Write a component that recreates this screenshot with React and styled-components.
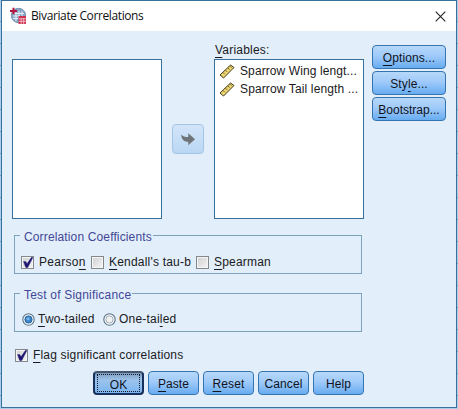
import React from "react";
import styled, { createGlobalStyle } from "styled-components";

const Global = createGlobalStyle`
  * { box-sizing: border-box; }
  body { margin: 0; overflow: hidden; }
`;

const Desktop = styled.div`
  width: 458px;
  height: 409px;
  padding: 0 1px 1px;
  background: repeating-linear-gradient(#a9cdea 0 21px, #6f9fc6 21px 22px);
  font-family: "Liberation Sans", Arial, sans-serif;
  font-size: 12px;
  color: #1a1a22;
`;

const Dialog = styled.div`
  width: 456px;
  height: 408px;
  border: 1px solid #37719c;
  background: #e2eefa;
  display: flex;
  flex-direction: column;
`;

const TitleBar = styled.header`
  height: 30px;
  flex: none;
  background: #fff;
  display: flex;
  align-items: center;
  padding: 0 10px 0 7px;
`;

const Title = styled.h1`
  flex: 1;
  margin: 0 0 0 4px;
  font: 400 12px/18px "Open Sans", "Noto Sans", sans-serif;
  letter-spacing: -0.38px;
  color: #111;
  white-space: nowrap;
`;

const Upper = styled.div`
  display: flex;
  flex: none;
  height: 204px;
  padding-left: 10px;
`;

const List = styled.div`
  width: 150px;
  height: 160px;
  border: 1px solid #35709f;
  background: #fff;
  padding-top: 2px;
`;

const SourceColumn = styled.div`
  padding-top: 28px;
`;

const MoveColumn = styled.div`
  width: 52px;
  padding: 93px 0 0 10px;
`;

const MoveButton = styled.button`
  width: 32px;
  height: 30px;
  padding: 0;
  border: 1px solid #a5c5e5;
  border-radius: 4px;
  background: linear-gradient(#d3e5f9, #bad7f5);
  display: grid;
  place-items: center;
`;

const Label = styled.div`
  height: 28px;
  padding: 12px 0 0 1px;
  line-height: 15px;
`;

const ListRow = styled.div`
  height: 18px;
  display: flex;
  align-items: center;
  gap: 5px;
  padding-left: 4px;
  white-space: nowrap;
`;

const SideButtons = styled.div`
  display: flex;
  flex-direction: column;
  gap: 2px;
  padding: 14px 0 0 8px;
`;

const Button = styled.button`
  width: ${(p) => p.$width}px;
  height: 24px;
  padding: 1px 0 0;
  border: 1px solid #3475b0;
  border-radius: 4px;
  background: linear-gradient(#b7d8f9 0%, #9fcafa 45%, #68acf0 100%);
  color: #10131c;
  font: 12px/16px "Liberation Sans", Arial, sans-serif;
  white-space: nowrap;
`;

const DefaultButton = styled(Button)`
  padding: 0;
  border: 2px solid #17305c;
  border-top-color: #46566e;
  background: linear-gradient(#7f9cbd 0%, #9cc3ec 35%, #7bb5f1 100%);
`;

const FocusRing = styled.span`
  display: block;
  height: 18px;
  margin: 0 2px;
  border: 1px dotted #101828;
  padding-top: 3px;
  line-height: 14px;
`;

const Group = styled.section`
  width: 348px;
  height: 39px;
  flex: none;
  margin: 0 0 ${(p) => p.$after}px 12px;
  border: 1px solid #7da2bb;
`;

const Legend = styled.h2`
  width: max-content;
  height: 16px;
  margin: -7px 0 0 5px;
  padding: 0 1px 0 4px;
  background: #e2eefa;
  color: #434796;
  font: 400 12px/16px "Liberation Sans", Arial, sans-serif;
`;

const OptionRow = styled.div`
  display: flex;
  align-items: center;
  height: 16px;
  flex: none;
  padding-left: ${(p) => p.$left}px;
  margin-top: ${(p) => p.$top}px;
`;

const Option = styled.label`
  display: flex;
  align-items: center;
  gap: ${(p) => p.$gap}px;
  width: ${(p) => p.$width}px;
  white-space: nowrap;
`;

const Box = styled.span`
  width: 13px;
  height: 13px;
  flex: none;
  border: 1px solid #83888d;
  box-shadow: inset 0 0 0 1px #f5f5f5;
  background: linear-gradient(135deg, #cfcfd0, #f6f6f6);
  display: block;

  svg { display: block; margin: -1px; }
`;

const Text = styled.span`
  letter-spacing: ${(p) => p.$spacing || 0}px;
  white-space: nowrap;
`;

const Key = styled.span`
  text-decoration: underline;
  text-decoration-thickness: 1px;
  text-underline-offset: 2.5px;
  text-decoration-skip-ink: none;
`;

const Footer = styled.footer`
  display: flex;
  gap: 4px;
  padding: 8px 0 0 91px;
`;

/* Renders a caption, underlining the character that follows "&". */
function Caption({ text, spacing }) {
  const at = text.indexOf("&");
  if (at < 0) return <Text $spacing={spacing}>{text}</Text>;
  return (
    <Text $spacing={spacing}>
      {text.slice(0, at)}
      <Key>{text[at + 1]}</Key>
      {text.slice(at + 2)}
    </Text>
  );
}

function AppIcon() {
  return (
    <svg width="18" height="18" viewBox="0 0 18 18">
      <circle cx="9.5" cy="8.5" r="7.2" fill="#86a5c6" stroke="#7795b5" />
      <path d="M5 6.500h10M4 9h7M4 11.500h5M7 5v9M10 4v7M13 4v5" stroke="#e5eff8" strokeWidth="1" />
      <path d="M1 4h7M4.500 .800v6.500" stroke="#b5123c" strokeWidth="2" />
      <path d="M9.500 9h7.500v8H9.500z" fill="#cf3453" />
      <path d="M10 11.800h7M10 14.300h7M12.200 11v6M14.700 11v6" stroke="#f5cbd4" strokeWidth=".8" />
    </svg>
  );
}

function CloseIcon() {
  return (
    <svg width="11" height="11" viewBox="0 0 11 11">
      <path d="M.7.7l9.6 9.6M10.3.7L.7 10.3" stroke="#222" strokeWidth="1.1" />
    </svg>
  );
}

function Ruler() {
  return (
    <svg width="16" height="15" viewBox="0 0 16 15">
      <path d="M1 11L11.500 1l3.500 2.500L4.500 14z" fill="#edd670" stroke="#40391b" />
      <path d="M4 8.500l1.600 1.600M6.500 6.200l1.600 1.600M9 4l1.600 1.600M11 2.200l1.400 1.400" stroke="#5c5020" strokeWidth=".9" />
    </svg>
  );
}

function MoveArrow() {
  return (
    <svg width="16" height="14" viewBox="0 0 16 14">
      <path d="M1.200 2.500C2.800 4.500 5 5 8.300 5V1.200L15 7.200l-6.700 6V9.800C4 10 1.200 7 1.200 2.500z" fill="#6e7478" />
    </svg>
  );
}

function Check({ checked }) {
  return (
    <Box>
      {checked && (
        <svg width="13" height="13" viewBox="0 0 13 13">
          <path d="M2.600 5.600l2.400.2.900 2.200L10.600 1.300l1.200.3L6.700 11.500H4.800z" fill="#1c1470" stroke="#1c1470" strokeWidth=".5" />
        </svg>
      )}
    </Box>
  );
}

function Radio({ checked }) {
  return (
    <svg width="13" height="13" viewBox="0 0 13 13">
      <circle cx="6.500" cy="6.500" r="5.700" fill="#f5f8fa" stroke="#597489" strokeWidth="1.100" />
      <circle cx="6.500" cy="6.500" r="3.600" fill={checked ? "#3b86cb" : "#f0f1f1"} stroke={checked ? "#286399" : "#a4adb5"} strokeWidth="1" />
      {checked && <circle cx="6" cy="5.800" r="1.500" fill="#78b8ec" />}
    </svg>
  );
}

export default function App() {
  return (
    <Desktop>
      <Global />
      <Dialog>
        <TitleBar>
          <AppIcon />
          <Title>Bivariate Correlations</Title>
          <CloseIcon />
        </TitleBar>
        <Upper>
          <SourceColumn><List /></SourceColumn>
          <MoveColumn><MoveButton><MoveArrow /></MoveButton></MoveColumn>
          <div>
            <Label><Caption text="&Variables:" spacing={0.2} /></Label>
            <List>
              <ListRow><Ruler /><Caption text="Sparrow Wing lengt..." spacing={0.1} /></ListRow>
              <ListRow><Ruler /><Caption text="Sparrow Tail length ..." spacing={0.13} /></ListRow>
            </List>
          </div>
          <SideButtons>
            <Button $width={74}><Caption text="&Options..." spacing={0.1} /></Button>
            <Button $width={74}><Caption text="Sty&le..." spacing={0.1} /></Button>
            <Button $width={74}><Caption text="&Bootstrap..." spacing={0} /></Button>
          </SideButtons>
        </Upper>
        <Group $after={19}>
          <Legend><Caption text="Correlation Coefficients" spacing={0.14} /></Legend>
          <OptionRow $left={6} $top={9}>
            <Option $gap={5} $width={70}><Check checked /><Caption text="Pearso&n" spacing={0.3} /></Option>
            <Option $gap={5} $width={105}><Check /><Caption text="&Kendall's tau-b" spacing={0.2} /></Option>
            <Option $gap={5} $width={100}><Check /><Caption text="&Spearman" spacing={0.2} /></Option>
          </OptionRow>
        </Group>
        <Group $after={15}>
          <Legend><Caption text="Test of Significance" spacing={0.2} /></Legend>
          <OptionRow $left={7} $top={8}>
            <Option $gap={3} $width={81}><Radio checked /><Caption text="&Two-tailed" spacing={0.2} /></Option>
            <Option $gap={3} $width={90}><Radio /><Caption text="One-tai&led" spacing={0.2} /></Option>
          </OptionRow>
        </Group>
        <OptionRow $left={13} $top={0}>
          <Option $gap={5} $width={180}><Check checked /><Caption text="&Flag significant correlations" spacing={0.17} /></Option>
        </OptionRow>
        <Footer>
          <DefaultButton $width={51}><FocusRing>OK</FocusRing></DefaultButton>
          <Button $width={51}><Caption text="&Paste" spacing={0.1} /></Button>
          <Button $width={51}><Caption text="&Reset" spacing={0.1} /></Button>
          <Button $width={51}><Caption text="Cancel" spacing={0.1} /></Button>
          <Button $width={51}><Caption text="Help" spacing={0.1} /></Button>
        </Footer>
      </Dialog>
    </Desktop>
  );
}
